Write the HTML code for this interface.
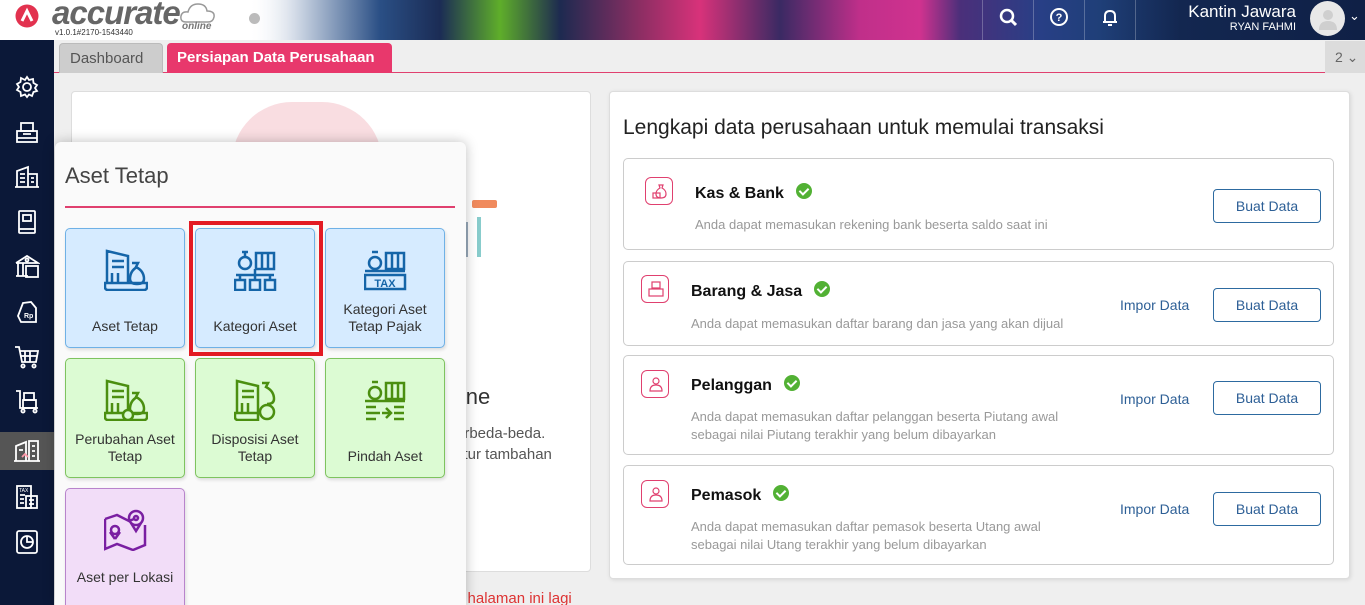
<!DOCTYPE html>
<html><head><meta charset="utf-8"><style>
*{box-sizing:border-box;margin:0;padding:0}
html,body{width:1365px;height:605px;overflow:hidden}
body{background:#efefef;font-family:"Liberation Sans",sans-serif;position:relative}
.hdr{position:absolute;left:0;top:0;width:1365px;height:40px;background:linear-gradient(90deg,#fff 0,#fff 250px,#c9d3e2 300px,#2a4f85 380px,#1b2c55 440px,#5fae2a 500px,#1d2a50 560px,#8c2e63 640px,#d8327a 700px,#3a2a63 780px,#c02f8a 860px,#d0328f 920px,#4b2f7a 960px,#283f86 1040px,#1f3f78 1100px,#132750 1180px,#0f2046 1365px)}
.side{position:absolute;left:0;top:40px;width:54px;height:565px;background:#0b1838}
.side .it{position:absolute;left:0;width:54px;height:38px;display:flex;align-items:center;justify-content:center}
.tabbar{position:absolute;left:54px;top:40px;width:1311px;height:33px;background:#efefef;border-bottom:1px solid #e0406f}
.tab{position:absolute;top:43px;height:30px;border-radius:4px 4px 0 0;font-size:15px;line-height:30px;padding:0 10px}
.card{position:absolute;background:#fff;border:1px solid #ddd;border-radius:4px}
.item{position:absolute;left:623px;width:711px;border:1px solid #ccc;border-radius:5px;background:#fff}
.item .ic{position:absolute;width:28px;height:28px;border:1.5px solid #e0406f;border-radius:6px}
.item h3{position:absolute;font-size:16px;font-weight:bold;color:#111}
.item .ok{display:inline-block;width:16px;height:16px;border-radius:50%;background:#52b134;margin-left:12px;vertical-align:-1px;position:relative}
.item .ok:after{content:"";position:absolute;left:5px;top:3px;width:4px;height:7px;border:solid #fff;border-width:0 2px 2px 0;transform:rotate(45deg)}
.item p{position:absolute;font-size:13px;color:#999;line-height:18px}
.btn{position:absolute;left:589px;width:108px;height:34px;border:1px solid #2d6aa0;border-radius:4px;color:#2d5f96;font-size:14px;text-align:center;line-height:32px}
.imp{position:absolute;left:496px;color:#2d5f96;font-size:14px}
.pop{position:absolute;left:55px;top:142px;width:411px;height:463px;background:#fafafa;border-radius:6px 6px 0 0;box-shadow:0 0 12px rgba(0,0,0,.25)}
.tile{position:absolute;width:120px;height:120px;border-radius:5px;text-align:center;font-size:14px;color:#333;line-height:17px;box-shadow:1px 2px 3px rgba(0,0,0,.12)}
.tile .lb{position:absolute;left:0;right:0;bottom:12px}
.tile svg{position:absolute;left:38px;top:20px}
.b{background:#d6ebff;border:1px solid #6fb1e6}
.g{background:#dcfbd3;border:1px solid #7ec35f}
.p{background:#f2ddf8;border:1px solid #b884cc}
</style></head><body>
<div class="hdr"></div>
<div style="position:absolute;left:0;top:0;width:300px;height:40px;background:linear-gradient(90deg,#fff 82%,rgba(255,255,255,0))"></div>
<svg style="position:absolute;left:15px;top:4px" width="24" height="24"><circle cx="12" cy="12" r="11.5" fill="#e2324f"/><path d="M7 17 L12 7 L17 17" stroke="#fff" stroke-width="3" fill="none"/></svg>
<div style="position:absolute;left:52px;top:-6px;font-size:33px;font-style:italic;font-weight:bold;color:#666;letter-spacing:-1px">accurate</div>
<svg style="position:absolute;left:180px;top:2px" width="36" height="22"><path d="M6 20 Q0 20 1 14 Q2 9 8 10 Q10 2 18 2 Q26 2 27 9 Q35 9 34 15 Q33 20 28 20 Z" fill="none" stroke="#999" stroke-width="1.5"/></svg>
<div style="position:absolute;left:182px;top:21px;font-size:10px;font-style:italic;font-weight:bold;color:#777">online</div>
<div style="position:absolute;left:55px;top:28px;font-size:8px;color:#333">v1.0.1#2170-1543440</div>
<div style="position:absolute;left:249px;top:13px;width:11px;height:11px;border-radius:50%;background:#bbb"></div>
<div style="position:absolute;left:982px;top:0;width:1px;height:40px;background:rgba(255,255,255,.25)"></div>
<div style="position:absolute;left:1033px;top:0;width:1px;height:40px;background:rgba(255,255,255,.25)"></div>
<div style="position:absolute;left:1084px;top:0;width:1px;height:40px;background:rgba(255,255,255,.25)"></div>
<div style="position:absolute;left:1135px;top:0;width:1px;height:40px;background:rgba(255,255,255,.25)"></div>
<svg style="position:absolute;left:999px;top:8px" width="20" height="20"><circle cx="8" cy="8" r="6" stroke="#fff" stroke-width="2.5" fill="none"/><path d="M12.5 12.5 L17 17" stroke="#fff" stroke-width="3"/></svg>
<svg style="position:absolute;left:1050px;top:8px" width="20" height="20"><circle cx="9" cy="9" r="8" stroke="#fff" stroke-width="2" fill="none"/><text x="9" y="13" font-size="11" font-weight="bold" fill="#fff" text-anchor="middle" font-family="Liberation Sans">?</text></svg>
<svg style="position:absolute;left:1101px;top:8px" width="18" height="20"><path d="M4 14 V8 Q4 3 9 3 Q14 3 14 8 V14 H2 H16" stroke="#fff" stroke-width="2" fill="none"/><path d="M7 17 H11" stroke="#fff" stroke-width="2"/></svg>
<div style="position:absolute;left:1150px;top:2px;width:146px;text-align:right;color:#fff;font-size:17px">Kantin Jawara</div>
<div style="position:absolute;left:1150px;top:21px;width:146px;text-align:right;color:#fff;font-size:11px">RYAN FAHMI</div>
<div style="position:absolute;left:1310px;top:1px;width:35px;height:35px;border-radius:50%;background:#e8e8e8"></div>
<svg style="position:absolute;left:1317px;top:7px" width="22" height="24"><circle cx="11" cy="8" r="5" fill="#cfcfcf"/><path d="M2 23 Q2 14 11 14 Q20 14 20 23Z" fill="#cfcfcf"/></svg>
<div style="position:absolute;left:1349px;top:8px;color:#fff;font-size:13px">⌄</div>

<div class="side">
<div class="it" style="top:28px"><svg width="24" height="24" fill="none" stroke="#fff" stroke-width="1.8"><circle cx="12" cy="12" r="4"/><path d="M12 2 L14 5 L18 4 L18.5 8 L22 10 L20 13 L22 16 L18.5 17 L17 21 L14 19.5 L12 22 L10 19.5 L6 21 L5.5 17 L2 15 L4 12 L2 9 L5.5 7 L6 3 L10 5Z"/></svg></div>
<div class="it" style="top:73px"><svg width="26" height="24" fill="none" stroke="#fff" stroke-width="1.8"><rect x="3" y="11" width="20" height="11"/><rect x="7" y="3" width="12" height="8"/><path d="M3 18H23M9 14h8"/></svg></div>
<div class="it" style="top:118px"><svg width="26" height="24" fill="none" stroke="#fff" stroke-width="1.8"><path d="M3 22V6L14 2V22M14 9H23V22M1 22H25M6 9h5M6 13h5M6 17h5M17 13h3M17 17h3"/></svg></div>
<div class="it" style="top:163px"><svg width="24" height="26" fill="none" stroke="#fff" stroke-width="1.8"><rect x="4" y="2" width="16" height="22" rx="1"/><rect x="8" y="6" width="8" height="6"/><path d="M4 20H20"/></svg></div>
<div class="it" style="top:208px"><svg width="26" height="26" fill="none" stroke="#fff" stroke-width="1.8"><path d="M2 9L13 2L24 9H2M4 9V22M9 9V22M2 22H14"/><rect x="12" y="12" width="12" height="11"/><circle cx="13" cy="6" r="1.5"/></svg></div>
<div class="it" style="top:253px"><svg width="24" height="26" fill="none" stroke="#fff" stroke-width="1.8"><path d="M8 4L16 3L21 9V23H6L3 17Z"/><text x="9" y="19" font-size="7" fill="#fff" stroke="none" font-weight="bold" font-family="Liberation Sans">Rp</text></svg></div>
<div class="it" style="top:298px"><svg width="26" height="26" fill="none" stroke="#fff" stroke-width="1.8"><path d="M1 3H5L8 18H22L24 7H6M11 7V18M16 7V18M7 12H23"/><circle cx="9" cy="22" r="1.6"/><circle cx="20" cy="22" r="1.6"/></svg></div>
<div class="it" style="top:343px"><svg width="26" height="26" fill="none" stroke="#fff" stroke-width="1.8"><path d="M2 2H6V19H24"/><rect x="10" y="4" width="10" height="7"/><rect x="9" y="11" width="13" height="8"/><circle cx="9" cy="22" r="1.6"/><circle cx="21" cy="22" r="1.6"/></svg></div>
<div class="it" style="top:392px;background:#555;height:38px"><svg width="28" height="26" fill="none" stroke="#fff" stroke-width="1.8"><path d="M3 23V8L13 4V23M16 23V3H25V23M1 23H27M6 12h4M19 8h3M19 13h3M19 18h3"/><path d="M9 19l3-3 3 3" stroke="#f9a"/></svg></div>
<div class="it" style="top:438px"><svg width="26" height="26" fill="none" stroke="#fff" stroke-width="1.8"><rect x="3" y="2" width="14" height="22"/><rect x="12" y="12" width="11" height="12"/><path d="M6 11h5M6 15h4M6 19h4M15 16h5M15 20h5"/><text x="5" y="8" font-size="5" fill="#fff" stroke="none" font-family="Liberation Sans">TAX</text></svg></div>
<div class="it" style="top:483px"><svg width="26" height="26" fill="none" stroke="#fff" stroke-width="1.8"><rect x="3" y="2" width="20" height="22" rx="2"/><circle cx="13" cy="13" r="6"/><path d="M13 7V13H19"/></svg></div>
</div>

<div class="tabbar"></div>
<div class="tab" style="left:59px;width:104px;background:#cdcdcd;color:#555;border:1px solid #bbb;border-bottom:none">Dashboard</div>
<div class="tab" style="left:167px;width:225px;background:#e8386c;color:#fff;font-weight:bold">Persiapan Data Perusahaan</div>
<div style="position:absolute;left:1325px;top:41px;width:40px;height:32px;background:#dcdcdc;color:#666;font-size:14px;line-height:32px;padding-left:10px">2 ⌄</div>

<div class="card" style="left:71px;top:91px;width:520px;height:481px">
<div style="position:absolute;left:160px;top:10px;width:150px;height:60px;border-radius:75px 75px 0 0;background:#f7d4da;opacity:.8"></div>
<div style="position:absolute;left:400px;top:108px;width:25px;height:8px;background:#f08a5d;border-radius:2px"></div>
<div style="position:absolute;left:392px;top:130px;width:4px;height:35px;background:#9ab"></div>
<div style="position:absolute;left:405px;top:125px;width:4px;height:40px;background:#8cc"></div>
<div style="position:absolute;left:384px;top:292px;font-size:22px;color:#333">line</div>
<div style="position:absolute;left:384px;top:333px;font-size:15px;color:#555">erbeda-beda.</div>
<div style="position:absolute;left:384px;top:354px;font-size:15px;color:#555">fitur tambahan</div>
</div>
<div style="position:absolute;left:455px;top:590px;font-size:15px;color:#d33">n halaman ini lagi</div>

<div class="card" style="left:609px;top:91px;width:741px;height:488px;box-shadow:1px 1px 4px rgba(0,0,0,.1)"></div>
<div style="position:absolute;left:623px;top:116px;font-size:21px;color:#222">Lengkapi data perusahaan untuk memulai transaksi</div>

<div class="item" style="top:158px;height:92px">
<div class="ic" style="left:21px;top:18px"></div><svg style="position:absolute;left:27px;top:23px" width="18" height="18" fill="none" stroke="#e0406f" stroke-width="1.2"><path d="M8 3h4l-1 3q4 2 4 6q0 4-5 4q-5 0-5-4q0-4 4-6z"/><rect x="2" y="11" width="7" height="5"/></svg>
<h3 style="left:71px;top:24px">Kas &amp; Bank<span class="ok"></span></h3>
<p style="left:71px;top:57px">Anda dapat memasukan rekening bank beserta saldo saat ini</p>
<div class="btn" style="top:30px">Buat Data</div></div>

<div class="item" style="top:261px;height:85px">
<div class="ic" style="left:17px;top:13px"></div><svg style="position:absolute;left:23px;top:18px" width="18" height="18" fill="none" stroke="#e0406f" stroke-width="1.2"><rect x="5" y="2" width="8" height="6"/><rect x="2" y="9" width="14" height="7"/></svg>
<h3 style="left:67px;top:19px">Barang &amp; Jasa<span class="ok"></span></h3>
<p style="left:67px;top:53px">Anda dapat memasukan daftar barang dan jasa yang akan dijual</p>
<div class="imp" style="top:35px">Impor Data</div>
<div class="btn" style="top:26px">Buat Data</div></div>

<div class="item" style="top:355px;height:100px">
<div class="ic" style="left:17px;top:14px"></div><svg style="position:absolute;left:23px;top:19px" width="18" height="18" fill="none" stroke="#e0406f" stroke-width="1.2"><circle cx="9" cy="6" r="3"/><path d="M3 16q0-6 6-6q6 0 6 6z"/></svg>
<h3 style="left:67px;top:19px">Pelanggan<span class="ok"></span></h3>
<p style="left:67px;top:52px">Anda dapat memasukan daftar pelanggan beserta Piutang awal<br>sebagai nilai Piutang terakhir yang belum dibayarkan</p>
<div class="imp" style="top:35px">Impor Data</div>
<div class="btn" style="top:25px">Buat Data</div></div>

<div class="item" style="top:465px;height:100px">
<div class="ic" style="left:17px;top:14px"></div><svg style="position:absolute;left:23px;top:19px" width="18" height="18" fill="none" stroke="#e0406f" stroke-width="1.2"><circle cx="9" cy="6" r="3"/><path d="M3 16q0-6 6-6q6 0 6 6z"/></svg>
<h3 style="left:67px;top:19px">Pemasok<span class="ok"></span></h3>
<p style="left:67px;top:52px">Anda dapat memasukan daftar pemasok beserta Utang awal<br>sebagai nilai Utang terakhir yang belum dibayarkan</p>
<div class="imp" style="top:35px">Impor Data</div>
<div class="btn" style="top:26px">Buat Data</div></div>

<div class="pop">
<div style="position:absolute;left:10px;top:21px;font-size:22px;color:#444">Aset Tetap</div>
<div style="position:absolute;left:10px;top:64px;width:390px;height:2px;background:#e0406f"></div>
</div>
<div style="position:absolute;left:189px;top:221px;width:134px;height:135px;border:4px solid #e31b23"></div>

<div class="tile b" style="left:65px;top:228px"><svg width="44" height="42" fill="none" stroke="#1565a8" stroke-width="2.5"><path d="M3 34V2L24 7V34M8 12h12M8 18h12M8 24v10M14 24v10"/><path d="M28 14h6l-2 4q8 4 8 12q0 5-7 5q-7 0-7-5q0-8 7-12"/><path d="M1 34H43V38Q43 41 40 41H4Q1 41 1 38Z"/></svg><div class="lb">Aset Tetap</div></div>
<div class="tile b" style="left:195px;top:228px"><svg width="44" height="42" fill="none" stroke="#1565a8" stroke-width="2.5"><circle cx="11" cy="14" r="6"/><path d="M8 3h6M11 3v5"/><rect x="22" y="4" width="18" height="16"/><path d="M28 4V20M34 4V20M21 20V26M2 26H40M6 26v4M21 26v4M36 26v4"/><rect x="1" y="31" width="10" height="10"/><rect x="16" y="31" width="10" height="10"/><rect x="31" y="31" width="10" height="10"/></svg><div class="lb">Kategori Aset</div></div>
<div class="tile b" style="left:325px;top:228px"><svg width="44" height="42" fill="none" stroke="#1565a8" stroke-width="2.5"><circle cx="11" cy="14" r="6"/><path d="M8 3h6"/><rect x="22" y="4" width="18" height="16"/><path d="M28 4V20M34 4V20M1 22H41"/><rect x="1" y="26" width="40" height="14"/><text x="21" y="38" font-size="11" font-weight="bold" fill="#1565a8" stroke="none" text-anchor="middle" font-family="Liberation Sans">TAX</text></svg><div class="lb">Kategori Aset<br>Tetap Pajak</div></div>

<div class="tile g" style="left:65px;top:358px"><svg width="44" height="42" fill="none" stroke="#4b8f10" stroke-width="2.5"><path d="M3 34V2L24 7V34M8 12h12M8 18h12M8 24v10M14 24v10"/><path d="M28 14h6l-2 4q8 4 8 12q0 5-7 5q-7 0-7-5q0-8 7-12"/><path d="M1 34H43V38Q43 41 40 41H4Q1 41 1 38Z"/><circle cx="24" cy="36" r="5" fill="#dcfbd3"/></svg><div class="lb">Perubahan Aset<br>Tetap</div></div>
<div class="tile g" style="left:195px;top:358px"><svg width="44" height="42" fill="none" stroke="#4b8f10" stroke-width="2.5"><path d="M3 34V2L24 7V34M8 12h12M8 18h12M8 24v10M14 24v10"/><path d="M28 4h6l-2 4q8 4 8 12q0 5-7 5"/><path d="M1 34H24V41H4Q1 41 1 38Z"/><circle cx="33" cy="33" r="7" fill="#dcfbd3"/></svg><div class="lb">Disposisi Aset<br>Tetap</div></div>
<div class="tile g" style="left:325px;top:358px"><svg width="44" height="42" fill="none" stroke="#4b8f10" stroke-width="2.5"><circle cx="11" cy="14" r="6"/><path d="M8 3h6"/><rect x="22" y="4" width="18" height="16"/><path d="M28 4V20M34 4V20M1 22H41M2 28h10M2 34h14M2 40h10M30 28h10M30 34h10M30 40h10M18 34h8M22 29l5 5-5 5"/></svg><div class="lb">Pindah Aset</div></div>

<div class="tile p" style="left:65px;top:488px;height:125px"><svg width="44" height="42" fill="none" stroke="#7a1fa2" stroke-width="2.5"><path d="M1 10L13 6L25 12L30 10M41 16V36L29 41L13 35L1 40V10"/><circle cx="11" cy="21" r="4"/><path d="M11 30L6 23M11 30L16 23"/><circle cx="32" cy="9" r="7"/><circle cx="32" cy="9" r="2"/><path d="M27 14L32 22L37 14"/></svg><div class="lb" style="bottom:26px">Aset per Lokasi</div></div>
</body></html>
